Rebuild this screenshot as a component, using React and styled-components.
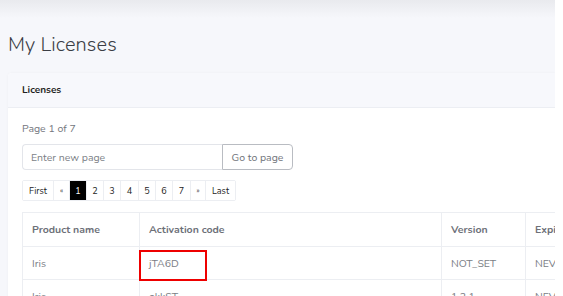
import React from "react";
import styled, { createGlobalStyle } from "styled-components";

const Global = createGlobalStyle`
  html, body { margin: 0; padding: 0; background: #ffffff; }
  body { font-family: "Nunito", Lato, "Open Sans", sans-serif; }
  * { box-sizing: border-box; }
`;

const Main = styled.div`
  width: 555px;
  height: 296px;
  overflow: hidden;
  background: #f6f7fb;
  position: relative;
`;

const TopShade = styled.div`
  height: 18px;
  background: linear-gradient(#e9eaee, #f6f7fb);
`;

const Title = styled.h1`
  margin: 15px 0 0 8px;
  font-size: 20px;
  font-weight: 300;
  color: #3a3d44;
  line-height: 24px;
  letter-spacing: 0.1px;
`;

const Card = styled.div`
  margin: 16px 0 0 8px;
  background: #ffffff;
  border-radius: 4px 0 0 0;
  box-shadow: 0 0 3px rgba(0, 0, 0, 0.04);
  overflow: hidden;
`;

const CardHeader = styled.div`
  height: 35px;
  padding: 0 14px;
  display: flex;
  align-items: center;
  background: #f7f8fc;
  border-bottom: 1px solid #eceef3;
  font-size: 10px;
  font-weight: 700;
  color: #1e1f22;
`;

const CardBody = styled.div`
  padding: 14px 0 0 14px;
`;

const PageInfo = styled.div`
  font-size: 10.5px;
  color: #73767d;
  line-height: 14px;
`;

const InputGroup = styled.div`
  display: flex;
  margin-top: 8px;
  width: 271px;
  height: 26px;
`;

const PageInput = styled.input`
  width: 200px;
  height: 26px;
  border: 1px solid #e3e5ea;
  border-right: none;
  border-radius: 4px 0 0 4px;
  padding: 0 8px;
  font-family: inherit;
  font-size: 10.5px;
  color: #555;
  outline: none;
  &::placeholder { color: #7c7f86; }
`;

const GoButton = styled.button`
  flex: 1;
  height: 26px;
  border: 1px solid #b9bcc2;
  border-radius: 0 4px 4px 0;
  background: #fff;
  font-family: inherit;
  font-size: 10.5px;
  color: #6f737a;
  padding: 0;
`;

const Pager = styled.ul`
  display: inline-flex;
  list-style: none;
  margin: 10px 0 0 0;
  padding: 0;
  border: 1px solid #eceef2;
  border-radius: 2px;
  height: 21px;
`;

const PageItem = styled.li`
  display: flex;
  align-items: center;
  justify-content: center;
  width: ${(p) => p.$w}px;
  font-size: ${(p) => (p.$small ? 7 : 9)}px;
  color: ${(p) => (p.$active ? "#ffffff" : "#222")};
  background: ${(p) => (p.$active ? "#000000" : "#ffffff")};
  border-left: ${(p) => (p.$first ? "none" : "1px solid #eceef2")};
`;

const Table = styled.table`
  margin-top: 11px;
  border-collapse: collapse;
  width: 620px;
  table-layout: fixed;
  font-size: 10.5px;
`;

const Th = styled.th`
  height: 34px;
  text-align: left;
  padding: 0 9px;
  font-weight: 700;
  color: #6d7078;
  border: 1px solid #eceef2;
  white-space: nowrap;
  overflow: hidden;
`;

const Td = styled.td`
  height: 33px;
  padding: 0 9px;
  color: #7a7d84;
  border: 1px solid #eceef2;
  white-space: nowrap;
  overflow: ${(p) => (p.$marked ? "visible" : "hidden")};
  position: relative;
`;

const Highlight = styled.div`
  position: absolute;
  left: -1px;
  top: 3px;
  width: 68px;
  height: 31px;
  border: 2px solid #ee0000;
  pointer-events: none;
  z-index: 1;
`;

const pages = [
  { label: "First", w: 30 },
  { label: "«", w: 16, small: true },
  { label: "1", w: 17, active: true },
  { label: "2", w: 17 },
  { label: "3", w: 17 },
  { label: "4", w: 18 },
  { label: "5", w: 17 },
  { label: "6", w: 17 },
  { label: "7", w: 18 },
  { label: "»", w: 15, small: true },
  { label: "Last", w: 30 },
];

const rows = [
  { product: "Iris", code: "jTA6D", version: "NOT_SET", exp: "NEVER", mark: true },
  { product: "Iris", code: "okkST", version: "1.2.1", exp: "NEVER" },
];

export default function App() {
  return (
    <>
      <Global />
      <Main>
        <TopShade />
        <Title>My Licenses</Title>
        <Card>
          <CardHeader>Licenses</CardHeader>
          <CardBody>
            <PageInfo>Page 1 of 7</PageInfo>
            <InputGroup>
              <PageInput placeholder="Enter new page" />
              <GoButton>Go to page</GoButton>
            </InputGroup>
            <Pager>
              {pages.map((p, i) => (
                <PageItem key={i} $w={p.w} $small={p.small} $active={p.active} $first={i === 0}>
                  {p.label}
                </PageItem>
              ))}
            </Pager>
            <Table>
              <colgroup>
                <col style={{ width: 117 }} />
                <col style={{ width: 302 }} />
                <col style={{ width: 84 }} />
                <col style={{ width: 117 }} />
              </colgroup>
              <thead>
                <tr>
                  <Th>Product name</Th>
                  <Th>Activation code</Th>
                  <Th>Version</Th>
                  <Th>Expiration</Th>
                </tr>
              </thead>
              <tbody>
                {rows.map((r, i) => (
                  <tr key={i}>
                    <Td>{r.product}</Td>
                    <Td $marked={r.mark}>
                      {r.code}
                      {r.mark && <Highlight />}
                    </Td>
                    <Td>{r.version}</Td>
                    <Td>{r.exp}</Td>
                  </tr>
                ))}
              </tbody>
            </Table>
          </CardBody>
        </Card>
      </Main>
    </>
  );
}
